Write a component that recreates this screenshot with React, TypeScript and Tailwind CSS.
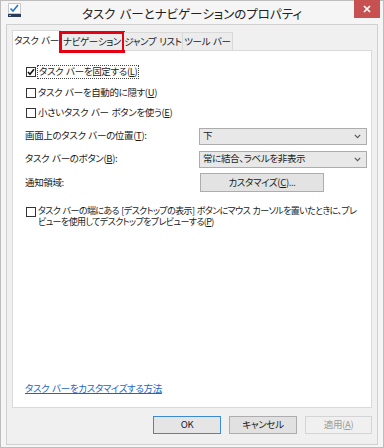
import React from "react";

const font = "font-['Noto_Sans_CJK_JP','Noto_Sans',sans-serif] [font-feature-settings:'palt']";

// widen the half-width spaces a little, the way the dialog font draws them
const sp = (s: string) => s.replace(/ /g, "\u2004");

const Key: React.FC<{ k: string }> = ({ k }) => (
  <span>
    (<span className="underline underline-offset-1">{k}</span>)
  </span>
);

const CheckBox: React.FC<{ checked?: boolean }> = ({ checked }) => (
  <span className="w-[10px] h-[10px] shrink-0 border border-[#333333] bg-white flex items-center justify-center">
    {checked && (
      <svg width="8" height="8" viewBox="0 0 8 8">
        <path d="M1 4 L3 6.2 L7 1.2" fill="none" stroke="#111" strokeWidth="1.6" />
      </svg>
    )}
  </span>
);

const Chevron: React.FC = () => (
  <svg width="7" height="5" viewBox="0 0 7 5">
    <path d="M0.8 0.8 L3.5 3.6 L6.2 0.8" fill="none" stroke="#555" strokeWidth="1.1" />
  </svg>
);

const Select: React.FC<{ value: string }> = ({ value }) => (
  <div className="w-[168px] h-[17px] border border-[#acacac] bg-[#e8e8e8] flex items-center justify-between pl-[3px] pr-[5px]">
    <span className="whitespace-nowrap">{value}</span>
    <Chevron />
  </div>
);

const App: React.FC = () => {
  const tabs = ["タスク バー", "ナビゲーション", "ジャンプ リスト", "ツール バー"];
  const tabWidths = ["w-[49px]", "w-[63px]", "w-[59px]", "w-[50px]"];

  return (
    <div className={`w-[384px] h-[448px] bg-[#f5f5f5] border border-[#bdbdbd] flex flex-col text-[9.5px] tracking-[-0.35px] text-[#1a1a1a] leading-none ${font}`}>
      {/* title bar */}
      <div className="relative h-[23px] shrink-0 flex items-center">
        <svg className="absolute left-[7px] top-[2px]" width="14" height="15" viewBox="0 0 14 15">
          <rect x="0.5" y="0.5" width="12" height="10" fill="#ffffff" stroke="#c8c8c8" />
          <path d="M2.5 5.5 L5 8 L10 2" fill="none" stroke="#1e78d2" strokeWidth="1.6" />
          <rect x="0" y="11" width="13" height="3" fill="#2a3b5c" />
          <rect x="1" y="12" width="2" height="1" fill="#8fb4e0" />
        </svg>
        <span className="flex-1 text-center text-[12.5px] tracking-normal text-[#222] mt-[3px] whitespace-nowrap">
          {sp("タスク バーとナビゲーションのプロパティ")}
        </span>
        <div className="absolute right-[3px] top-[-1px] w-[26px] h-[18px] bg-[#c75050] flex items-center justify-center">
          <svg width="8" height="8" viewBox="0 0 8 8">
            <path d="M1 1 L7 7 M7 1 L1 7" stroke="#fff" strokeWidth="1.7" />
          </svg>
        </div>
      </div>

      {/* client area */}
      <div className="flex-1 mx-[5px] mb-[2px] border border-[#d0d0d0] bg-[#f0f0f0] px-[5px] pt-[5px] flex flex-col">
        {/* tabs */}
        <div className="h-[20px] flex items-end shrink-0 relative z-10">
          {tabs.map((t, i) =>
            i === 0 ? (
              <div
                key={t}
                className={`${tabWidths[i]} h-[21px] -mb-px bg-white border border-b-0 border-[#d9d9d9] flex items-center justify-center whitespace-nowrap`}
              >
                {sp(t)}
              </div>
            ) : (
              <div
                key={t}
                className={`${tabWidths[i]} relative h-[18px] bg-[#ececec] border border-b-0 border-l-0 border-[#d9d9d9] flex items-center justify-center whitespace-nowrap`}
              >
                {sp(t)}
                {i === 1 && (
                  <div className="absolute left-[-2px] right-[-2px] top-[-2px] bottom-[-3px] border-[3px] border-[#e60012]" />
                )}
              </div>
            )
          )}
        </div>

        {/* panel */}
        <div className="h-[358px] bg-white border border-[#d9d9d9] flex flex-col pl-[13px] pr-[3px] pt-[14px]">
          <div className="flex items-center h-[14px]">
            <CheckBox checked />
            <span className="ml-px border border-dotted border-[#444] px-px py-[1px] whitespace-nowrap">
              {sp("タスク バーを固定する")}
              <Key k="L" />
            </span>
          </div>
          <div className="flex items-center h-[14px] mt-[7px]">
            <CheckBox />
            <span className="ml-[2px] whitespace-nowrap">
              {sp("タスク バーを自動的に隠す")}
              <Key k="U" />
            </span>
          </div>
          <div className="flex items-center h-[14px] mt-[6px]">
            <CheckBox />
            <span className="ml-[2px] whitespace-nowrap">
              {sp("小さいタスク バー ボタンを使う")}
              <Key k="E" />
            </span>
          </div>

          <div className="flex items-center justify-between mt-[7px] h-[18px] pr-[1px] -ml-px">
            <span className="whitespace-nowrap">
              {sp("画面上のタスク バーの位置")}
              <Key k="T" />:
            </span>
            <Select value="下" />
          </div>
          <div className="flex items-center justify-between mt-[5px] h-[18px] pr-[1px] -ml-px">
            <span className="whitespace-nowrap">
              {sp("タスク バーのボタン")}
              <Key k="B" />:
            </span>
            <Select value="常に結合、ラベルを非表示" />
          </div>
          <div className="flex items-center mt-[5px] h-[19px] -ml-px">
            <span className="w-[175px]">通知領域:</span>
            <div className="w-[124px] h-[19px] border border-[#adadad] bg-[#e3e3e3] flex items-center justify-center whitespace-nowrap">
              カスタマイズ<Key k="C" />...
            </div>
          </div>

          <div className="flex items-start mt-[13px]">
            <span className="mt-[2px]">
              <CheckBox />
            </span>
            <span className="ml-[2px] leading-[11px] whitespace-nowrap text-[9px] tracking-[-0.6px]">
              {sp("タスク バーの端にある [デスクトップの表示] ボタンにマウス カーソルを置いたときに、プレ")}
              <br />
              {sp("ビューを使用してデスクトップをプレビューする")}
              <Key k="P" />
            </span>
          </div>

          <div className="flex-1" />
          <div className="mb-[14px] -ml-px">
            <span className="text-[#1a66c8] underline underline-offset-1">{sp("タスク バーをカスタマイズする方法")}</span>
          </div>
        </div>

        {/* buttons */}
        <div className="flex justify-end gap-[8px] mt-[8px]">
          <div className="w-[68px] h-[18px] border border-[#3c8ad6] bg-[#e5e5e5] flex items-center justify-center">OK</div>
          <div className="w-[68px] h-[18px] border border-[#adadad] bg-[#e1e1e1] flex items-center justify-center">キャンセル</div>
          <div className="w-[67px] h-[18px] border border-[#d4d4d4] bg-[#f0f0f0] text-[#9c9c9c] flex items-center justify-center">
            適用<Key k="A" />
          </div>
        </div>
      </div>
    </div>
  );
};

export default App;
